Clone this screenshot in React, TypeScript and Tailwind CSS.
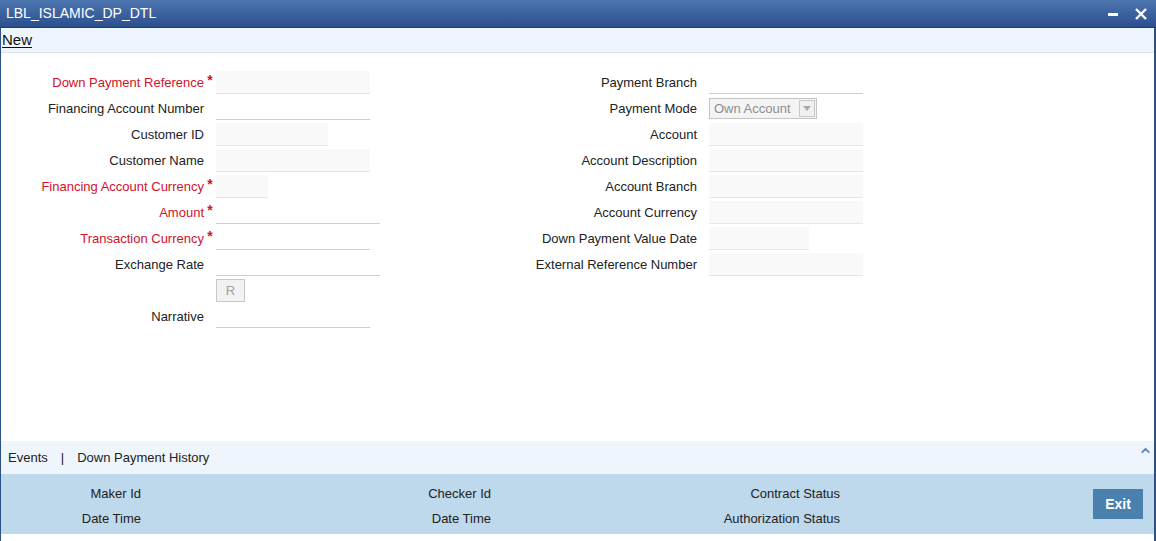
import { ChevronUp } from 'lucide-react'

type Field = {
  label: string
  required?: boolean
  kind: 'ro' | 'line' | 'button' | 'select'
  width?: string
}

const leftFields: Field[] = [
  { label: 'Down Payment Reference', required: true, kind: 'ro', width: 'w-[154px]' },
  { label: 'Financing Account Number', kind: 'line', width: 'w-[154px]' },
  { label: 'Customer ID', kind: 'ro', width: 'w-[112px]' },
  { label: 'Customer Name', kind: 'ro', width: 'w-[154px]' },
  { label: 'Financing Account Currency', required: true, kind: 'ro', width: 'w-[52px]' },
  { label: 'Amount', required: true, kind: 'line', width: 'w-[164px]' },
  { label: 'Transaction Currency', required: true, kind: 'line', width: 'w-[154px]' },
  { label: 'Exchange Rate', kind: 'line', width: 'w-[164px]' },
  { label: '', kind: 'button' },
  { label: 'Narrative', kind: 'line', width: 'w-[154px]' }
]

const rightFields: Field[] = [
  { label: 'Payment Branch', kind: 'line', width: 'w-[154px]' },
  { label: 'Payment Mode', kind: 'select' },
  { label: 'Account', kind: 'ro', width: 'w-[154px]' },
  { label: 'Account Description', kind: 'ro', width: 'w-[154px]' },
  { label: 'Account Branch', kind: 'ro', width: 'w-[154px]' },
  { label: 'Account Currency', kind: 'ro', width: 'w-[154px]' },
  { label: 'Down Payment Value Date', kind: 'ro', width: 'w-[100px]' },
  { label: 'External Reference Number', kind: 'ro', width: 'w-[154px]' }
]

function Input({ field }: { field: Field }) {
  if (field.kind === 'button') {
    return (
      <div className="mt-px flex h-[23px] w-[29px] items-center justify-center border border-[#c8c8c8] bg-[#f2f2f2] text-[13px] text-[#a0a0a0]">
        R
      </div>
    )
  }
  if (field.kind === 'select') {
    return (
      <div className="mt-[2px] flex h-[21px] w-[108px] items-center justify-between border border-[#c4c4c4] bg-[#f4f4f4] pl-[4px] pr-[1px] text-[13px] text-[#8e8e8e]">
        <span>Own Account</span>
        <span className="flex h-[17px] w-[16px] items-center justify-center border border-[#c8c8c8] bg-[#f0f0f0]">
          <svg width="8" height="5" viewBox="0 0 8 5">
            <path d="M0 0h8L4 5z" fill="#a8a8a8" />
          </svg>
        </span>
      </div>
    )
  }
  if (field.kind === 'ro') {
    return <div className={`mt-px h-[23px] border-b border-[#e6e6e6] bg-[#f9f9f9] ${field.width}`} />
  }
  return <div className={`mt-px h-[23px] border-b border-[#cfcfcf] bg-white ${field.width}`} />
}

function Row({ field, labelWidth }: { field: Field; labelWidth: string }) {
  return (
    <div className="flex h-[26px] items-start">
      <div
        className={`flex h-[26px] shrink-0 items-center justify-end text-[13px] ${labelWidth} ${field.required ? 'text-[#d0122c]' : 'text-[#222]'}`}
      >
        {field.label}
      </div>
      <div className="flex h-[26px] w-[12px] shrink-0 justify-center pt-[3px] text-[14px] font-bold leading-none text-[#d0122c]">
        {field.required ? '*' : ''}
      </div>
      <Input field={field} />
    </div>
  )
}

export default function App() {
  return (
    <div
      className="flex h-[541px] w-[1156px] flex-col overflow-hidden bg-white"
      style={{ fontFamily: '"Liberation Sans", Arial, sans-serif' }}
    >
      <div className="flex h-[28px] shrink-0 items-center justify-between border-b border-[#223f70] bg-gradient-to-b from-[#4d76b0] to-[#2b4f8d] pl-[6px] pr-[9px] text-white">
        <span className="text-[14px]">LBL_ISLAMIC_DP_DTL</span>
        <div className="flex items-center gap-[17px]">
          <span className="mt-[1px] block h-[3px] w-[10px] bg-white" />
          <svg width="12" height="12" viewBox="0 0 12 12">
            <path d="M1 1l10 10M11 1L1 11" stroke="white" strokeWidth="2.4" />
          </svg>
        </div>
      </div>

      <div className="flex flex-1 flex-col border-x border-l-[#2c4f86] border-r-[#2c4f86] border-r-2">
        <div className="flex h-[25px] shrink-0 items-center border-b border-[#dfe3e8] bg-[#eef5fd] pl-px">
          <span className="text-[15px] text-[#111] underline underline-offset-2">New</span>
        </div>

        <div className="flex flex-1 pt-[17px]">
          <div className="w-[480px] shrink-0">
            {leftFields.map((f, i) => (
              <Row key={i} field={f} labelWidth="w-[203px]" />
            ))}
          </div>
          <div>
            {rightFields.map((f, i) => (
              <Row key={i} field={f} labelWidth="w-[216px]" />
            ))}
          </div>
        </div>

        <div className="flex h-[33px] shrink-0 items-center justify-between bg-[#eef5fd] pl-[7px] pr-[2px] text-[13px] text-[#222]">
          <div className="flex items-center">
            <span>Events</span>
            <span className="mx-[13px]">|</span>
            <span>Down Payment History</span>
          </div>
          <ChevronUp className="mb-[14px] h-[13px] w-[13px] text-[#5f87c4]" strokeWidth={3.5} />
        </div>

        <div className="flex h-[60px] shrink-0 items-center bg-[#bed8ec] text-[13px] text-[#222]">
          <div className="flex w-[140px] flex-col items-end gap-[6px] pt-[4px]">
            <span>Maker Id</span>
            <span>Date Time</span>
          </div>
          <div className="flex w-[350px] flex-col items-end gap-[6px] pt-[4px]">
            <span>Checker Id</span>
            <span>Date Time</span>
          </div>
          <div className="flex w-[349px] flex-col items-end gap-[6px] pt-[4px]">
            <span>Contract Status</span>
            <span>Authorization Status</span>
          </div>
          <div className="flex flex-1 justify-end pr-[11px]">
            <button className="h-[30px] w-[50px] bg-[#4a80ae] text-[14px] font-bold text-white">Exit</button>
          </div>
        </div>
        <div className="h-[7px] shrink-0 bg-white" />
      </div>
    </div>
  )
}
